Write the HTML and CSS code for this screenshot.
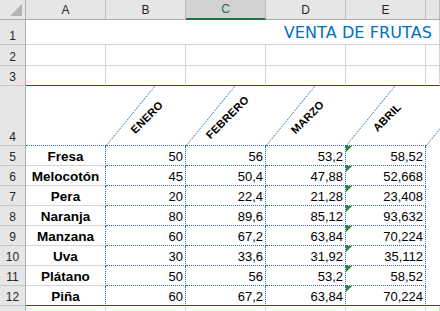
FILE: index.html
```html
<!DOCTYPE html>
<html lang="es">
<head>
    <meta charset="UTF-8">
    <title>Venta de frutas</title>
    <link rel="stylesheet" href="styles.css">
</head>
<body>

    <div class="sheet">
        <!-- column headers -->
        <div class="corner"><span class="tri"></span></div>
        <div class="colh">A</div>
        <div class="colh">B</div>
        <div class="colh sel">C</div>
        <div class="colh">D</div>
        <div class="colh">E</div>
        <div class="colh"></div>

        <!-- row 1 -->
        <div class="rowh">1</div>
        <div class="cell title">VENTA DE FRUTAS</div>

        <!-- row 2 -->
        <div class="rowh">2</div>
        <div class="cell"></div><div class="cell"></div><div class="cell"></div>
        <div class="cell"></div><div class="cell"></div><div class="cell"></div>

        <!-- row 3 -->
        <div class="rowh">3</div>
        <div class="cell red"></div><div class="cell red"></div><div class="cell red"></div>
        <div class="cell red"></div><div class="cell red"></div><div class="cell red"></div>

        <!-- row 4 -->
        <div class="rowh">4</div>
        <div class="cell head"></div>
        <div class="cell month"><svg class="slant" viewBox="0 0 80 60"><line x1="0" y1="60" x2="49" y2="0"/></svg><span>ENERO</span></div>
        <div class="cell month"><svg class="slant" viewBox="0 0 80 60"><line x1="0" y1="60" x2="49" y2="0"/></svg><span>FEBRERO</span></div>
        <div class="cell month"><svg class="slant" viewBox="0 0 80 60"><line x1="0" y1="60" x2="49" y2="0"/></svg><span>MARZO</span></div>
        <div class="cell month"><svg class="slant" viewBox="0 0 80 60"><line x1="0" y1="60" x2="49" y2="0"/></svg><span>ABRIL</span></div>
        <div class="cell month last"><svg class="slant" viewBox="0 0 80 60"><line x1="0" y1="60" x2="49" y2="0"/></svg></div>

        <div class="rowh">5</div>
        <div class="cell name">Fresa</div>
        <div class="cell num">50</div><div class="cell num">56</div><div class="cell num">53,2</div><div class="cell num flag">58,52</div>
        <div class="cell blank"></div>

        <div class="rowh">6</div>
        <div class="cell name">Melocotón</div>
        <div class="cell num">45</div><div class="cell num">50,4</div><div class="cell num">47,88</div><div class="cell num flag">52,668</div>
        <div class="cell blank"></div>

        <div class="rowh">7</div>
        <div class="cell name">Pera</div>
        <div class="cell num">20</div><div class="cell num">22,4</div><div class="cell num">21,28</div><div class="cell num flag">23,408</div>
        <div class="cell blank"></div>

        <div class="rowh">8</div>
        <div class="cell name">Naranja</div>
        <div class="cell num">80</div><div class="cell num">89,6</div><div class="cell num">85,12</div><div class="cell num flag">93,632</div>
        <div class="cell blank"></div>

        <div class="rowh">9</div>
        <div class="cell name">Manzana</div>
        <div class="cell num">60</div><div class="cell num">67,2</div><div class="cell num">63,84</div><div class="cell num flag">70,224</div>
        <div class="cell blank"></div>

        <div class="rowh">10</div>
        <div class="cell name">Uva</div>
        <div class="cell num">30</div><div class="cell num">33,6</div><div class="cell num">31,92</div><div class="cell num flag">35,112</div>
        <div class="cell blank"></div>

        <div class="rowh">11</div>
        <div class="cell name">Plátano</div>
        <div class="cell num">50</div><div class="cell num">56</div><div class="cell num">53,2</div><div class="cell num flag">58,52</div>
        <div class="cell blank"></div>

        <div class="rowh">12</div>
        <div class="cell name red">Piña</div>
        <div class="cell num red">60</div><div class="cell num red">67,2</div><div class="cell num red">63,84</div><div class="cell num flag red">70,224</div>
        <div class="cell blank red"></div>

        <!-- row 13, only its top edge is on screen -->
        <div class="rowh"></div>
        <div class="cell"></div><div class="cell"></div><div class="cell"></div>
        <div class="cell"></div><div class="cell"></div><div class="cell"></div>
    </div>

</body>
</html>
```

FILE: styles.css
```css
* {
    margin: 0;
    padding: 0;
    box-sizing: border-box;
}
body {
    background: white;
    font-family: "Liberation Sans", Arial, sans-serif;
    overflow: hidden;
}
.sheet {
    display: grid;
    grid-template-columns: 26px repeat(5, 80px) 1fr;
    grid-template-rows: 20px 25px 21px 20px 60px repeat(8, 20px) 20px;
    width: 440px;
}

/* headers */
.corner, .colh, .rowh {
    background: #e6e6e6;
    color: #262626;
    font-size: 12px;
}
.corner {
    border-right: 1px solid #ababab;
    border-bottom: 1px solid #ababab;
    display: flex;
    justify-content: flex-end;
    align-items: flex-end;
    padding: 0 3px 3px 0;
}
.tri {
    width: 0;
    height: 0;
    border-left: 12px solid transparent;
    border-bottom: 12px solid #b4b4b4;
}
.colh {
    border-right: 1px solid #bdbdbd;
    border-bottom: 1px solid #ababab;
    display: flex;
    justify-content: center;
    align-items: center;
}
.colh.sel {
    background: #d2d2d2;
    color: #217346;
    border-bottom: 2px solid #217346;
}
.rowh {
    border-right: 1px solid #ababab;
    border-bottom: 1px solid #c6c6c6;
    display: flex;
    justify-content: center;
    align-items: flex-end;
    line-height: 14px;
    padding-bottom: 1px;
}

/* cells */
.cell {
    border-right: 1px solid #d4d4d4;
    border-bottom: 1px solid #d4d4d4;
    display: flex;
    align-items: flex-end;
    font-size: 13px;
    line-height: 15px;
    padding-bottom: 1px;
    color: black;
    position: relative;
}
.cell.red {
    border-bottom: 1px solid #e00000;
}
.title {
    grid-column: 2 / -1;
    justify-content: flex-end;
    align-items: center;
    padding: 0 7px 0 0;
    font-family: "DejaVu Sans", sans-serif;
    font-size: 16px;
    letter-spacing: 0.1px;
    color: #0070c0;
}
.head {
    border-right: none;
    border-bottom: 1px dotted #2e6fb7;
}
.month {
    border-right: none;
    border-bottom: 1px dotted #2e6fb7;
    justify-content: center;
    align-items: center;
    padding: 4px 0 0 3px;
    overflow: hidden;
}
.month.last {
    border-bottom: none;
}
.month span {
    transform: rotate(-45deg);
    font-weight: bold;
    font-size: 11px;
    letter-spacing: 0.2px;
    white-space: nowrap;
}
.slant {
    position: absolute;
    left: 0;
    top: 0;
    width: 80px;
    height: 60px;
}
.slant line {
    stroke: #3a7cc2;
    stroke-width: 1;
    stroke-dasharray: 2 1;
}
.name {
    border-right: 1px dotted #2e6fb7;
    justify-content: center;
    font-weight: bold;
    font-size: 13.5px;
}
.num {
    border-right: 1px dotted #2e6fb7;
    border-bottom: 1px dotted #2e6fb7;
    justify-content: flex-end;
    padding-right: 2px;
}
.flag::before {
    content: "";
    position: absolute;
    left: 0;
    top: 0;
    border-top: 6px solid #1f8a24;
    border-right: 6px solid transparent;
}
.blank {
    border-right: none;
    border-bottom: none;
}
.blank.red {
    border-bottom: 1px solid #e00000;
}
```
